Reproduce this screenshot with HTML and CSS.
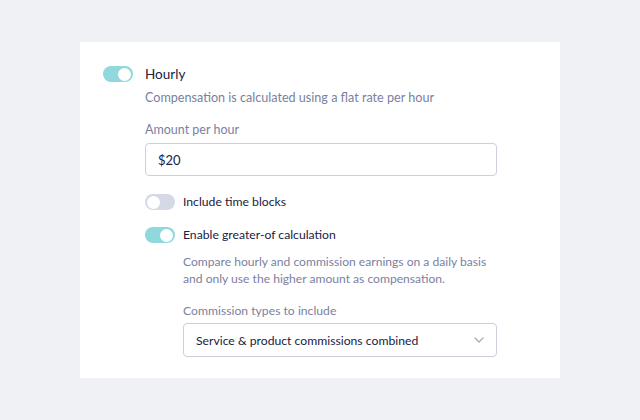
FILE: index.html
```html
<!DOCTYPE html>
<html>
<head>
<meta charset="utf-8">
<link rel="stylesheet" href="styles.css">
</head>
<body>
<div class="card">
  <div class="row head">
    <span class="toggle on"><span class="knob"></span></span>
    <span class="title">Hourly</span>
  </div>
  <div class="body">
    <p class="desc first">Compensation is calculated using a flat rate per hour</p>
    <label class="label">Amount per hour</label>
    <div class="input">$20</div>
    <div class="row opt opt1">
      <span class="toggle"><span class="knob"></span></span>
      <span class="opt-text">Include time blocks</span>
    </div>
    <div class="row opt opt2">
      <span class="toggle on"><span class="knob"></span></span>
      <span class="opt-text">Enable greater-of calculation</span>
    </div>
    <div class="sub">
      <p class="desc two">Compare hourly and commission earnings on a daily basis<br>and only use the higher amount as compensation.</p>
      <label class="label">Commission types to include</label>
      <div class="input select">
        <span>Service &amp; product commissions combined</span>
        <svg class="chev" width="10" height="6" viewBox="0 0 10 6"><path d="M1 1l4 4 4-4" fill="none" stroke="#a3a7bd" stroke-width="1.2" stroke-linecap="round" stroke-linejoin="round"/></svg>
      </div>
    </div>
  </div>
</div>
</body>
</html>
```
FILE: styles.css
```css
* { box-sizing: border-box; }
html, body { margin: 0; padding: 0; }
body {
  background: #f0f1f5;
  width: 640px;
  height: 420px;
  font-family: Lato, "Liberation Sans", sans-serif;
  padding-top: 42px;
}
.card {
  background: #fff;
  margin-left: 80px;
  width: 480px;
  height: 336px;
  padding: 24px 63px 22px 23px;
}
.row { display: flex; align-items: center; gap: 12px; }
.toggle {
  width: 30px; height: 16px; border-radius: 8px;
  background: #d5d9e6;
  display: flex; align-items: center; padding: 2px;
  flex: none;
}
.toggle.on { background: #8fd8dc; justify-content: flex-end; }
.knob { width: 13px; height: 13px; border-radius: 50%; background: #fff; }
.title { font-size: 13.5px; color: #20213f; line-height: 16px; }
.body { padding-left: 42px; }
.desc { margin: 0; font-size: 12.6px; color: #7a7f9f; white-space: nowrap; }
.desc.first { margin-top: 9px; line-height: 14px; }
.label { display: block; font-size: 12.5px; color: #7a7f9f; line-height: 14px; margin-top: 18px; }
.input {
  margin-top: 6px;
  height: 33px;
  border: 1px solid #cdd0dd;
  border-radius: 4px;
  display: flex; align-items: center;
  padding: 0 12px;
  font-size: 13px; color: #20213f;
}
.opt-text { font-size: 12.2px; color: #20213f; line-height: 16px; }
.opt { gap: 8px; }
.opt1 { margin-top: 18px; }
.opt2 { margin-top: 17px; }
.sub { padding-left: 38px; }
.desc.two { margin-top: 10px; line-height: 17px; font-size: 12.1px; }
.sub .label { margin-top: 17px; font-size: 12.2px; }
.sub .input { margin-top: 5px; height: 34px; justify-content: space-between; padding-right: 12px; font-size: 12.2px; }
.chev { flex: none; }
```
